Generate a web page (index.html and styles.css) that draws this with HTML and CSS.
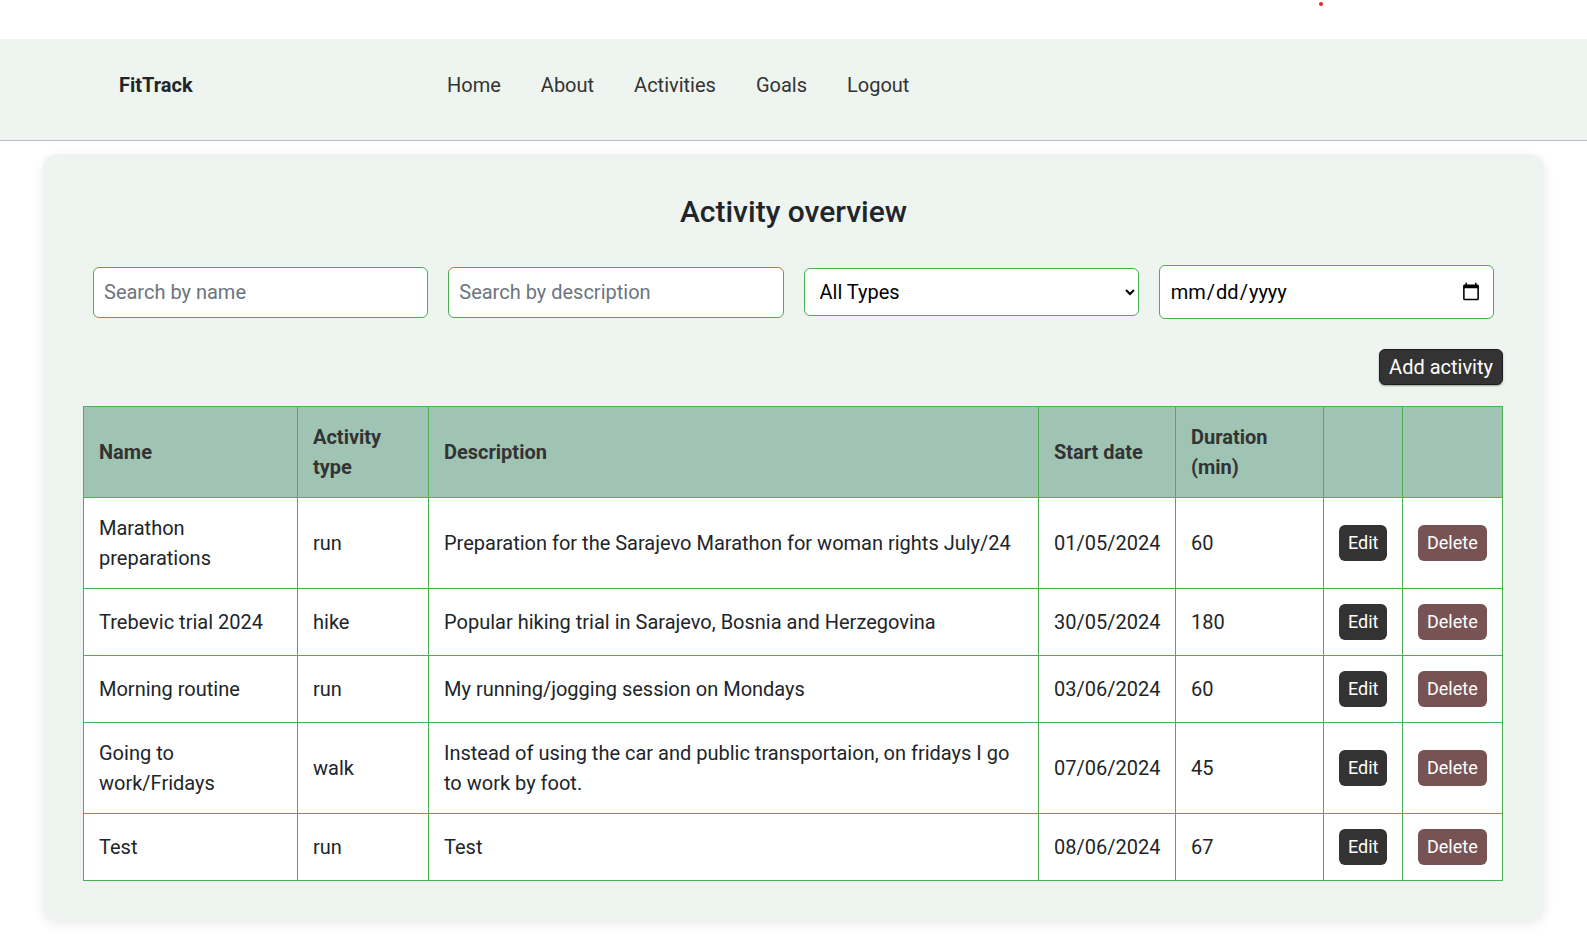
FILE: index.html
```html
<!DOCTYPE html>
<html lang="en">
<head>
<meta charset="utf-8">
<title>FitTrack - Activities</title>
<link rel="stylesheet" href="styles.css">
</head>
<body>
<span class="cursor-dot"></span>
<nav class="navbar">
  <a class="brand" href="#">FitTrack</a>
  <ul class="nav-links">
    <li><a href="#">Home</a></li>
    <li><a href="#">About</a></li>
    <li><a href="#">Activities</a></li>
    <li><a href="#">Goals</a></li>
    <li><a href="#">Logout</a></li>
  </ul>
</nav>
<main class="card">
  <h1 class="title">Activity overview</h1>
  <div class="filters">
    <input class="field text-field" type="text" placeholder="Search by name">
    <input class="field text-field" type="text" placeholder="Search by description">
    <select class="field select-field">
      <option>All Types</option>
      <option>run</option>
      <option>hike</option>
      <option>walk</option>
    </select>
    <input class="field date-field" type="date">
  </div>
  <div class="actions">
    <button class="btn btn-add">Add activity</button>
  </div>
  <table class="activities">
    <colgroup>
      <col class="c-name">
      <col class="c-type">
      <col class="c-desc">
      <col class="c-date">
      <col class="c-dur">
      <col class="c-edit">
      <col class="c-del">
    </colgroup>
    <thead>
      <tr>
        <th>Name</th>
        <th>Activity type</th>
        <th>Description</th>
        <th>Start date</th>
        <th>Duration (min)</th>
        <th></th>
        <th></th>
      </tr>
    </thead>
    <tbody>
      <tr>
        <td>Marathon preparations</td>
        <td>run</td>
        <td>Preparation for the Sarajevo Marathon for woman rights July/24</td>
        <td>01/05/2024</td>
        <td>60</td>
        <td><button class="btn btn-edit">Edit</button></td>
        <td><button class="btn btn-delete">Delete</button></td>
      </tr>
      <tr>
        <td>Trebevic trial 2024</td>
        <td>hike</td>
        <td>Popular hiking trial in Sarajevo, Bosnia and Herzegovina</td>
        <td>30/05/2024</td>
        <td>180</td>
        <td><button class="btn btn-edit">Edit</button></td>
        <td><button class="btn btn-delete">Delete</button></td>
      </tr>
      <tr>
        <td>Morning routine</td>
        <td>run</td>
        <td>My running/jogging session on Mondays</td>
        <td>03/06/2024</td>
        <td>60</td>
        <td><button class="btn btn-edit">Edit</button></td>
        <td><button class="btn btn-delete">Delete</button></td>
      </tr>
      <tr>
        <td>Going to work/Fridays</td>
        <td>walk</td>
        <td>Instead of using the car and public transportaion, on fridays I go to work by foot.</td>
        <td>07/06/2024</td>
        <td>45</td>
        <td><button class="btn btn-edit">Edit</button></td>
        <td><button class="btn btn-delete">Delete</button></td>
      </tr>
      <tr>
        <td>Test</td>
        <td>run</td>
        <td>Test</td>
        <td>08/06/2024</td>
        <td>67</td>
        <td><button class="btn btn-edit">Edit</button></td>
        <td><button class="btn btn-delete">Delete</button></td>
      </tr>
    </tbody>
  </table>
</main>
</body>
</html>
```

FILE: styles.css
```css
* {
  box-sizing: border-box;
}

html, body {
  margin: 0;
  padding: 0;
}

body {
  background: #ffffff;
  color: #212529;
  font-family: Roboto, "Liberation Sans", sans-serif;
  font-size: 20px;
  line-height: 1.5;
  padding-bottom: 28px;
}

.cursor-dot {
  position: absolute;
  left: 1319px;
  top: 2px;
  width: 4px;
  height: 4px;
  border-radius: 50%;
  background: #e8262a;
}

.navbar {
  margin-top: 39px;
  background: #eef5f0;
  border-bottom: 1px solid #b3c0cb;
  display: flex;
  align-items: center;
  padding: 31px 0 40px 119px;
}

.brand {
  flex: none;
  width: 328px;
  font-weight: 700;
  color: #212529;
  text-decoration: none;
  line-height: 30px;
}

.nav-links {
  list-style: none;
  margin: 0;
  padding: 0;
  display: flex;
  gap: 40px;
}

.nav-links a {
  color: #333333;
  text-decoration: none;
  line-height: 30px;
}

.card {
  display: block;
  margin: 13px 43px 0 43px;
  padding: 40px 40px 38px 40px;
  background: #eef5f0;
  border-radius: 14px;
  box-shadow: 0 4px 12px rgba(0, 0, 0, 0.09);
}

.title {
  margin: 0;
  text-align: center;
  font-size: 30px;
  font-weight: 500;
  line-height: 36px;
  color: #212529;
}

.filters {
  margin-top: 35px;
  padding: 0 10px;
  display: grid;
  grid-template-columns: repeat(4, minmax(0, 1fr));
  align-items: center;
  column-gap: 20px;
  height: 54px;
}

.field {
  width: 100%;
  min-width: 0;
  font-family: Roboto, "Liberation Sans", sans-serif;
  font-size: 20px;
  color: #212529;
  background: #ffffff;
  border: 1px solid #4caf50;
  border-radius: 6px;
  outline: none;
}

.text-field {
  height: 51px;
  padding: 0 10px;
}

.text-field::placeholder {
  color: #6c757d;
}

.select-field {
  height: 48px;
  padding: 0 14px 0 11px;
  color: #000;
}

.date-field {
  height: 54px;
  padding: 0 10px;
  color: #000;
}

.actions {
  margin-top: 30px;
  display: flex;
  justify-content: flex-end;
  margin-bottom: 21px;
}

.btn {
  font-family: Roboto, "Liberation Sans", sans-serif;
  color: #ffffff;
  border: none;
  border-radius: 6px;
  cursor: pointer;
}

.btn-add {
  background: #333333;
  border: 1px solid #1f1f1f;
  font-size: 20px;
  line-height: 24px;
  padding: 5px 9px;
  box-shadow: 0 1px 2px rgba(0, 0, 0, 0.35);
  margin-right: 1px;
}

.btn-edit,
.btn-delete {
  font-size: 18px;
  line-height: 24px;
  padding: 6px 9px;
  display: block;
}

.btn-edit {
  background: #333333;
}

.btn-delete {
  background: #785353;
}

.activities {
  width: 1419px;
  table-layout: fixed;
  border-collapse: collapse;
  background: #ffffff;
}

.c-name { width: 214px; }
.c-type { width: 131px; }
.c-desc { width: 610px; }
.c-date { width: 137px; }
.c-dur { width: 148px; }
.c-edit { width: 79px; }
.c-del { width: 100px; }

.activities th,
.activities td {
  border: 1px solid #4caf50;
  padding: 15px 15px 15px 15px;
  text-align: left;
  vertical-align: middle;
  line-height: 30px;
}

.activities th {
  background: #a0c4b3;
  color: #333333;
  font-weight: 700;
}

.activities td {
  color: #212529;
}
```
